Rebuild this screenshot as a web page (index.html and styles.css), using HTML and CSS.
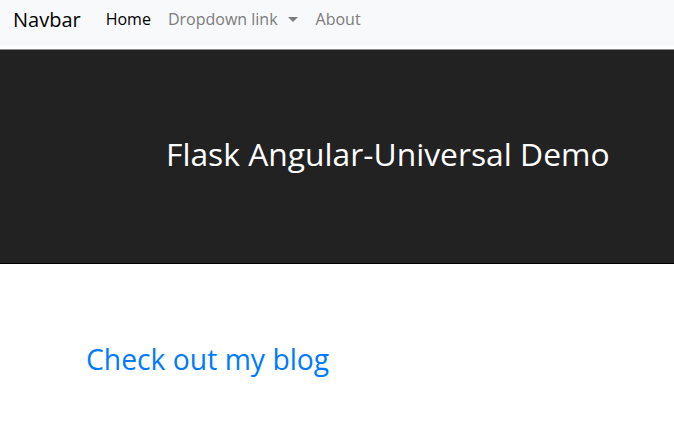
FILE: index.html
```html
<!DOCTYPE html>
<html>
<head>
<meta charset="utf-8">
<link rel="stylesheet" href="styles.css">
</head>
<body>
<nav class="navbar">
  <a class="brand" href="#">Navbar</a>
  <ul class="nav">
    <li><a class="nav-link active" href="#">Home</a></li>
    <li><a class="nav-link dropdown" href="#">Dropdown link<span class="caret"></span></a></li>
    <li><a class="nav-link" href="#">About</a></li>
  </ul>
</nav>
<div class="spacer"></div>
<header class="hero">
  <h1 class="hero-title">Flask Angular-Universal Demo</h1>
</header>
<main class="content">
  <a class="blog-link" href="#">Check out my blog</a>
</main>
</body>
</html>
```
FILE: styles.css
```css
html, body {
  margin: 0;
  padding: 0;
}
body {
  font-family: "Open Sans", "Noto Sans", sans-serif;
  background: #fff;
  color: #212529;
}
a { text-decoration: none; }
.navbar {
  display: flex;
  align-items: center;
  height: 46px;
  box-sizing: border-box;
  padding: 0 13px 8px;
  background: #f8f9fa;
}
.spacer {
  height: 3px;
  background: #fff;
  border-bottom: 1px solid #888;
}
.brand {
  font-size: 20px;
  color: #000;
  margin-right: 25px;
}
.nav {
  display: flex;
  list-style: none;
  margin: 0;
  padding: 0;
  gap: 17px;
}
.nav-link {
  font-size: 16px;
  color: #7c7c7c;
  display: flex;
  align-items: center;
}
.nav-link.active { color: #000; }
.caret {
  display: inline-block;
  margin-left: 10px;
  margin-right: 1px;
  border-top: 5px solid #7c7c7c;
  border-left: 5px solid transparent;
  border-right: 5px solid transparent;
}
.hero {
  background: #222;
  height: 213px;
  border-bottom: 1px solid #000;
  display: flex;
  align-items: center;
  padding-left: 166px;
}
.hero-title {
  margin: 0 0 6px;
  font-weight: 400;
  font-size: 31.8px;
  color: #fff;
}
.content {
  padding: 76px 0 0 86px;
}
.blog-link {
  font-size: 28.3px;
  color: #007bff;
}
```
